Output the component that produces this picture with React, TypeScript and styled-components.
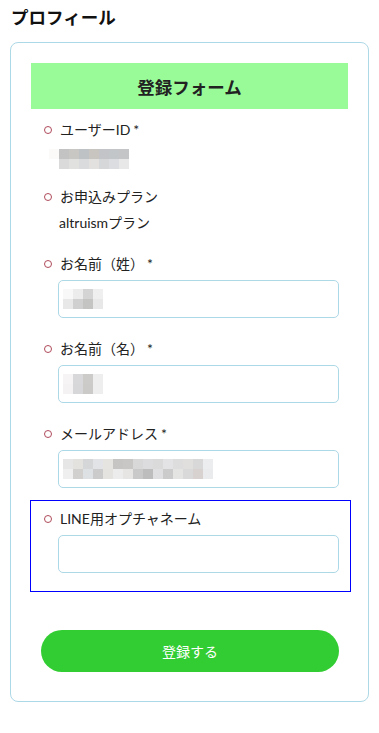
import React from 'react';
import styled, { createGlobalStyle } from 'styled-components';

const GlobalStyle = createGlobalStyle`
  body {
    margin: 0;
    background: #ffffff;
    font-family: 'Lato', 'Noto Sans CJK JP', sans-serif;
    color: #222222;
  }
`;

const Page = styled.div`
  padding: 0 10px 30px;
`;

const PageTitle = styled.h2`
  margin: 0;
  padding: 7px 1px 0;
  height: 42px;
  box-sizing: border-box;
  font-size: 17.5px;
  line-height: 22px;
  font-weight: 700;
  color: #111111;
`;

const Card = styled.div`
  border: 1px solid #add8e6;
  border-radius: 8px;
  padding: 20px 18px 29px 20px;
`;

const FormHeader = styled.div`
  height: 46px;
  margin-right: 2px;
  background: #98fb98;
  display: flex;
  align-items: center;
  justify-content: center;
  font-size: 17.5px;
  font-weight: 700;
  color: #222222;
`;

const Fields = styled.div`
  display: flex;
  flex-direction: column;
  margin-top: 3px;
`;

const Field = styled.div<{ $active?: boolean }>`
  padding: 8px 11px ${p => (p.$active ? '18px' : '13px')} 13px;
  outline: ${p => (p.$active ? '1px solid #0000ff' : 'none')};
  display: flex;
  flex-direction: column;
  gap: 6px;
`;

const Label = styled.div`
  display: flex;
  align-items: center;
  gap: 8px;
  font-size: 14px;
  line-height: 20px;
  height: 20px;
`;

const Bullet = styled.span`
  width: 6px;
  height: 6px;
  border: 1.5px solid #b04a5a;
  border-radius: 50%;
  flex-shrink: 0;
`;

const Required = styled.span`
  margin-left: 3px;
`;

const Value = styled.div`
  margin-left: 15px;
  font-size: 14px;
  line-height: 20px;
  min-height: 20px;
`;

const IdValue = styled(Value)`
  margin-left: 5px;
  height: 20px;
  padding-top: 3px;
  box-sizing: border-box;
`;

const InputBox = styled.div`
  margin-left: 14px;
  height: 38px;
  box-sizing: border-box;
  border: 1px solid #add8e6;
  border-radius: 5px;
  padding: 8px 4px;
  display: flex;
  align-items: flex-start;
`;

const Mosaic = styled.div<{ $cols: number }>`
  display: grid;
  grid-template-columns: repeat(${p => p.$cols}, 10px);
  grid-auto-rows: 10px;
`;

const Cell = styled.span<{ $c: string }>`
  background: ${p => p.$c};
`;

const SubmitButton = styled.button`
  display: block;
  margin: 39px 11px 0 10px;
  height: 42px;
  width: calc(100% - 21px);
  border: none;
  border-radius: 21px;
  background: #32cd32;
  color: #ffffff;
  font-family: 'Lato', 'Noto Sans CJK JP', sans-serif;
  font-size: 14px;
  cursor: pointer;
`;

const idCells = [
  '#fbfaf9', '#c4c3c3', '#c8c7c4', '#bfc2c4', '#c8c4c0', '#c3c4c7', '#c3c6c9', '#c4c5c6',
  '#ffffff', '#dadada', '#e1e1e0', '#d9dbdc', '#e2e1df', '#d6d7d8', '#dcdde0', '#e8e8e8',
];

const seiCells = [
  '#f8f8f8', '#ececec', '#d4d4d4', '#efefef',
  '#e8e8e8', '#d0d0d0', '#c4c4c2', '#e8e8e9',
];

const meiCells = [
  '#f6f4f4', '#d8d8da', '#cdcbca', '#eeeeef',
  '#f4f2f2', '#d7d7d9', '#cccac9', '#eeeeef',
];

const mailCells = [
  '#e6e6e6', '#e4e2df', '#d5d6d8', '#e2e3e6', '#e6e4e1', '#c7c5c4', '#c9c7c6', '#d8d8d9',
  '#dcdcde', '#dadadb', '#e3e3e6', '#dddddd', '#e1dfdd', '#d8d8d9', '#ecedef',
  '#efefef', '#d2d0ce', '#dde1e4', '#cbcbcb', '#e4e3e0', '#ececec', '#e6e5e3', '#c9c9ca',
  '#bdbdbd', '#dfdfe1', '#cbcbcb', '#e4e4e2', '#d9d9da', '#d7d2d0', '#e9ebed',
];

const MosaicBlock: React.FC<{ cols: number; cells: string[] }> = ({ cols, cells }) => (
  <Mosaic $cols={cols}>
    {cells.map((c, i) => (
      <Cell key={i} $c={c} />
    ))}
  </Mosaic>
);

export default function App() {
  return (
    <>
      <GlobalStyle />
      <Page>
        <PageTitle>プロフィール</PageTitle>
        <Card>
          <FormHeader>登録フォーム</FormHeader>
          <Fields>
            <Field>
              <Label>
                <Bullet />
                <span>
                  ユーザーID<Required>*</Required>
                </span>
              </Label>
              <IdValue>
                <MosaicBlock cols={8} cells={idCells} />
              </IdValue>
            </Field>
            <Field>
              <Label>
                <Bullet />
                お申込みプラン
              </Label>
              <Value>altruismプラン</Value>
            </Field>
            <Field>
              <Label>
                <Bullet />
                <span>
                  お名前（姓）<Required>*</Required>
                </span>
              </Label>
              <InputBox>
                <MosaicBlock cols={4} cells={seiCells} />
              </InputBox>
            </Field>
            <Field>
              <Label>
                <Bullet />
                <span>
                  お名前（名）<Required>*</Required>
                </span>
              </Label>
              <InputBox>
                <MosaicBlock cols={4} cells={meiCells} />
              </InputBox>
            </Field>
            <Field>
              <Label>
                <Bullet />
                <span>
                  メールアドレス<Required>*</Required>
                </span>
              </Label>
              <InputBox>
                <MosaicBlock cols={15} cells={mailCells} />
              </InputBox>
            </Field>
            <Field $active>
              <Label>
                <Bullet />
                LINE用オプチャネーム
              </Label>
              <InputBox />
            </Field>
          </Fields>
          <SubmitButton>登録する</SubmitButton>
        </Card>
      </Page>
    </>
  );
}
